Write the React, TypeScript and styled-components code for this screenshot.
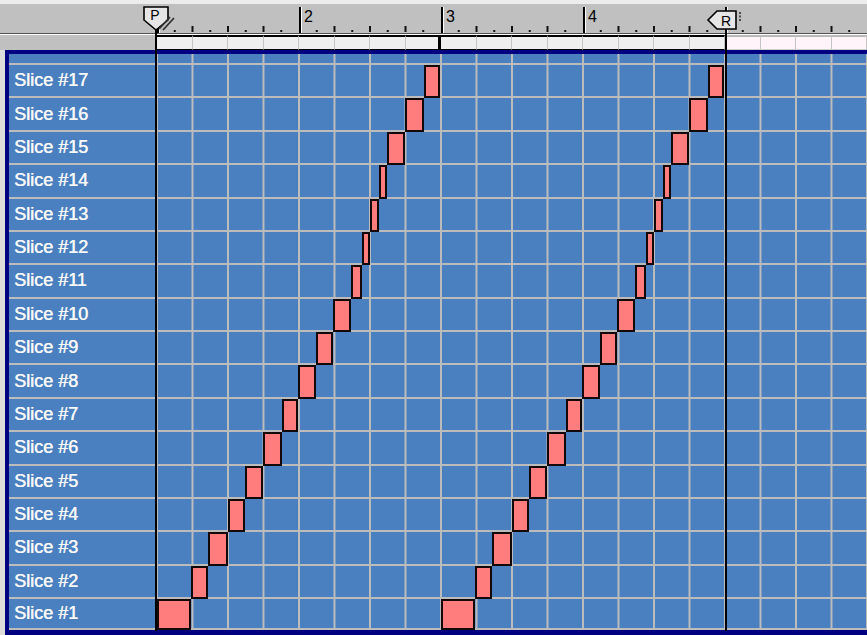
import React from 'react';
import styled, { createGlobalStyle } from 'styled-components';

// geometry of the arrange window, in px
const GRID_X = 157;
const BAR = 142;
const BEAT = BAR / 4;
const BARS = 5;
const ROW_H = 33.375;
const LOOP = 284;

// slice start offsets within one loop (px from loop start), loop length 283
const SLICE_STARTS = [0, 34, 51, 71, 88, 106, 125, 141, 159, 176, 194, 205, 213, 222, 230, 248, 267];
const LOOP_END = 283;

const GlobalStyle = createGlobalStyle`
  html, body {
    margin: 0;
    padding: 0;
  }
  body {
    background: #dcdcdc;
    overflow: hidden;
    font-family: "Liberation Sans", Arial, sans-serif;
  }
`;

const Page = styled.div`
  position: relative;
  width: 867px;
  height: 635px;
  overflow: hidden;
  background: #dcdcdc;
`;

const TopStrip = styled.div`
  height: 4px;
  background: #ececec;
`;

const RulerRow = styled.div`
  display: flex;
  height: 29px;
  background: #c0c0c0;
  border-bottom: 1px solid #505050;
`;

const Spacer = styled.div`
  flex: none;
  width: ${GRID_X}px;
  background: #c0c0c0;
`;

const Ruler = styled.div`
  display: flex;
  flex: 1;
  overflow: hidden;
`;

const BarCell = styled.div`
  position: relative;
  flex: none;
  width: ${BAR}px;
  height: 100%;
`;

const BarNumber = styled.span`
  position: absolute;
  left: 5px;
  top: 5px;
  font-size: 16px;
  line-height: 16px;
  color: #000;
`;

const Ticks = styled.svg`
  position: absolute;
  left: 0;
  top: 0;
`;

const StripRow = styled.div`
  display: flex;
  height: 16px;
  box-sizing: border-box;
  border-top: 1px solid #ffffff;
`;

const Strip = styled.div`
  display: flex;
  flex: 1;
  overflow: hidden;
`;

const StripCell = styled.div<{ $inside: boolean; $edge: boolean }>`
  flex: none;
  width: ${BEAT}px;
  height: 100%;
  box-sizing: border-box;
  background: ${(p) => (p.$inside ? '#efefef' : '#fff4fa')};
  border-top: 2px solid ${(p) => (p.$inside ? '#000' : '#b8b8b8')};
  border-bottom: 1px solid ${(p) => (p.$inside ? '#000' : '#d0d0d0')};
  border-right: ${(p) => (p.$edge ? '3px solid #000' : '1px solid #c4c4c4')};
`;

const Frame = styled.div`
  margin-left: 5px;
  border: 4px solid #000080;
  border-bottom-width: 5px;
  border-right: none;
  background: #4a80bf;
`;

const Row = styled.div<{ $spacer?: boolean; $last?: boolean }>`
  display: flex;
  box-sizing: border-box;
  height: ${(p) => (p.$spacer ? '9px' : `${ROW_H}px`)};
  border-top: ${(p) => (p.$spacer ? 'none' : '2px solid #bcbcbc')};
  border-bottom: ${(p) => (p.$last ? '2px solid #bcbcbc' : 'none')};
`;

const Label = styled.div`
  flex: none;
  width: ${GRID_X - 9}px;
  box-sizing: border-box;
  display: flex;
  align-items: center;
  padding-left: 5px;
  color: #f8f8f8;
  font-size: 18px;
  white-space: nowrap;
  text-shadow: 0.4px 0 0 #f8f8f8;
`;

const Lane = styled.div`
  position: relative;
  flex: 1;
  background-image: linear-gradient(to right, #bcbcbc 2px, transparent 2px);
  background-size: ${BEAT}px 100%;
  background-position: -1px 0;
`;

const Note = styled.div`
  position: absolute;
  top: 0;
  bottom: -2px;
  box-sizing: border-box;
  background: #ff7d7d;
  border: 2px solid #120808;
  z-index: 1;
`;

const LocatorLine = styled.div<{ $x: number; $top: number }>`
  position: absolute;
  left: ${(p) => p.$x}px;
  top: ${(p) => p.$top}px;
  width: 2px;
  height: ${(p) => 631 - p.$top}px;
  background: #000;
  z-index: 2;
`;

const LocatorFlag = styled.svg<{ $x: number; $y: number }>`
  position: absolute;
  left: ${(p) => p.$x}px;
  top: ${(p) => p.$y}px;
  z-index: 3;
  overflow: visible;
`;

const RulerBar = ({ index }: { index: number }) => {
  const subs = Array.from({ length: 7 }, (_, i) => i + 1);
  return (
    <BarCell>
      <Ticks width={BAR} height={29}>
        <rect x={0} y={3} width={2} height={26} fill="#000" />
        <rect x={2} y={3} width={1} height={26} fill="#fff" />
        {subs.map((j) => {
          const x = (j * BAR) / 8;
          return j % 2 === 0 ? (
            <rect key={j} x={x - 1} y={22} width={2} height={6} fill="#111" />
          ) : (
            <rect key={j} x={x - 1} y={26} width={2} height={2} fill="#111" />
          );
        })}
      </Ticks>
      {index > 1 && index < 5 && <BarNumber>{index}</BarNumber>}
    </BarCell>
  );
};

const slices = Array.from({ length: 17 }, (_, i) => 17 - i);

const App = () => {
  const beats = Array.from({ length: BARS * 4 }, (_, i) => i);

  return (
    <>
      <GlobalStyle />
      <Page>
        <TopStrip />
        <RulerRow>
          <Spacer />
          <Ruler>
            {Array.from({ length: BARS }, (_, i) => (
              <RulerBar key={i} index={i + 1} />
            ))}
          </Ruler>
        </RulerRow>
        <StripRow>
          <Spacer />
          <Strip>
            {beats.map((b) => (
              <StripCell key={b} $inside={b < 16} $edge={b === 7} />
            ))}
          </Strip>
        </StripRow>
        <Frame>
          <Row $spacer>
            <Label />
            <Lane />
          </Row>
          {slices.map((n) => {
            const start = SLICE_STARTS[n - 1];
            const end = n < 17 ? SLICE_STARTS[n] : LOOP_END;
            return (
              <Row key={n} $last={n === 1}>
                <Label>Slice #{n}</Label>
                <Lane>
                  {[0, LOOP].map((off) => (
                    <Note key={off} style={{ left: start + off, width: end - start }} />
                  ))}
                </Lane>
              </Row>
            );
          })}
        </Frame>

        <LocatorLine $x={155} $top={29} />
        <LocatorLine $x={725} $top={28} />

        <LocatorFlag $x={138} $y={0} width={44} height={32}>
          <polygon points="6,7 30,7 30,20 18,30 6,20" fill="#e6e6e6" stroke="#000" strokeWidth={1.6} />
          <text x={17} y={20} fontSize={14} fontFamily="Liberation Sans, Arial, sans-serif" textAnchor="middle" fill="#000">
            P
          </text>
          <line x1={21} y1={29} x2={32} y2={17} stroke="#303030" strokeWidth={1.8} />
          <line x1={25} y1={30} x2={36} y2={18} stroke="#303030" strokeWidth={1.8} />
        </LocatorFlag>

        <LocatorFlag $x={700} $y={5} width={44} height={26}>
          <polygon points="8,15 17,6 36,6 36,24 17,24" fill="#e6e6e6" stroke="#000" strokeWidth={1.6} />
          <text x={26} y={21} fontSize={14} fontFamily="Liberation Sans, Arial, sans-serif" textAnchor="middle" fill="#000">
            R
          </text>
          <line x1={40} y1={7} x2={40} y2={17} stroke="#000" strokeWidth={1.2} strokeDasharray="2 1.5" />
        </LocatorFlag>
      </Page>
    </>
  );
};

export default App;
